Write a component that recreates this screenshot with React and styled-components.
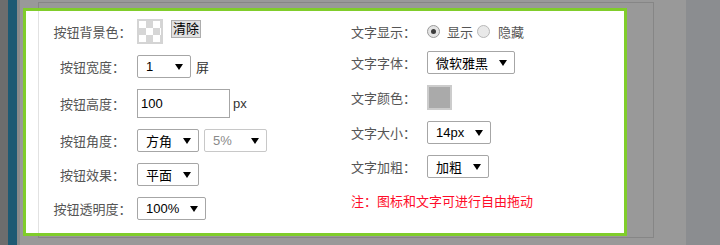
import React from "react";
import styled, { createGlobalStyle } from "styled-components";

const GlobalStyle = createGlobalStyle`
    html, body {
        margin: 0;
        padding: 0;
        background: #999999;
    }
    body {
        font-family: "Liberation Sans", "Noto Sans CJK SC", sans-serif;
        font-size: 13px;
    }
`;

const Page = styled.div`
    position: relative;
    display: flex;
    flex-direction: row;
    width: 720px;
    height: 245px;
    overflow: hidden;
    background: #999999;
`;

const Strip = styled.div`
    width: ${(p) => p.w}px;
    flex-shrink: 0;
    background: ${(p) => p.color};
`;

const Main = styled.div`
    flex: 1;
    padding: 2px 0 0 18px;
`;

const BackBox = styled.div`
    box-sizing: border-box;
    width: 616px;
    height: 236px;
    border: 1px solid #868686;
`;

const Panel = styled.div`
    position: absolute;
    left: 23px;
    top: 8px;
    box-sizing: border-box;
    width: 604px;
    height: 228px;
    border: 3px solid #80cd2b;
    background: #ffffff;
    display: flex;
    flex-direction: row;
`;

const Body = styled.div`
    flex: 1;
    display: flex;
    flex-direction: row;
    margin-left: 12px;
    border-left: 1px solid #e2e2e2;
`;

const Column = styled.div`
    display: flex;
    flex-direction: column;
    gap: 11px;
    padding-top: ${(p) => p.top}px;
    padding-left: ${(p) => p.left || 0}px;
    width: ${(p) => (p.width ? `${p.width}px` : "auto")};
    box-sizing: border-box;
`;

const Row = styled.div`
    display: flex;
    flex-direction: row;
    align-items: center;
    height: ${(p) => p.h}px;
`;

const Label = styled.span`
    flex-shrink: 0;
    width: ${(p) => p.w}px;
    margin-right: ${(p) => p.gap || 0}px;
    text-align: ${(p) => p.align || "left"};
    color: #555555;
    font-size: 13px;
    white-space: nowrap;
`;

const SelectBox = styled.div`
    box-sizing: border-box;
    display: flex;
    align-items: center;
    justify-content: space-between;
    width: ${(p) => p.w}px;
    height: 23px;
    margin-left: ${(p) => p.ml || 0}px;
    padding: 0 7px 0 8px;
    border: 1px solid ${(p) => (p.disabled ? "#c8c8c8" : "#a6a6a6")};
    border-radius: 2px;
    background: #ffffff;
    color: ${(p) => (p.disabled ? "#8a8a8a" : "#000000")};
    font-size: 13px;
    white-space: nowrap;
`;

const Arrow = styled.span`
    width: 0;
    height: 0;
    border-left: 4px solid transparent;
    border-right: 4px solid transparent;
    border-top: 6px solid #000000;
`;

const Select = ({ value, w, ml, disabled }) => (
    <SelectBox w={w} ml={ml} disabled={disabled}>
        <span>{value}</span>
        <Arrow />
    </SelectBox>
);

const TextInput = styled.div`
    box-sizing: border-box;
    width: 93px;
    height: 29px;
    padding-left: 3px;
    display: flex;
    align-items: center;
    border: 1px solid #a6a6a6;
    color: #000000;
    font-size: 13px;
`;

const Unit = styled.span`
    margin-left: ${(p) => p.ml}px;
    color: #333333;
    font-size: 13px;
`;

const Checker = styled.div`
    box-sizing: border-box;
    width: 26px;
    height: 25px;
    border: 2px solid #d4d4d4;
    background: repeating-conic-gradient(#d6d6d6 0 25%, #ffffff 0 50%) 0 0 / 14px 14px;
`;

const ColorSwatch = styled.div`
    box-sizing: border-box;
    width: 25px;
    height: 25px;
    border: 2px solid #cccccc;
    background: #aaaaaa;
`;

const ClearButton = styled.button`
    box-sizing: border-box;
    height: 18px;
    margin-left: 8px;
    margin-top: -6px;
    padding: 0 1px;
    border: 1px solid #adadad;
    border-radius: 0;
    background: #e1e1e1;
    color: #000000;
    font-family: inherit;
    font-size: 13px;
    line-height: 16px;
`;

const Radio = styled.span`
    box-sizing: border-box;
    width: 13px;
    height: 13px;
    border-radius: 50%;
    border: 1px solid ${(p) => (p.checked ? "#9a9a9a" : "#b8b8b8")};
    background: ${(p) => (p.checked ? "#e4e4e4" : "#e9e9e9")};
    display: flex;
    align-items: center;
    justify-content: center;
    margin-left: ${(p) => p.ml || 0}px;
    &::after {
        content: "";
        display: ${(p) => (p.checked ? "block" : "none")};
        width: 5px;
        height: 5px;
        border-radius: 50%;
        background: #3c3c3c;
    }
`;

const RadioText = styled.span`
    margin-left: ${(p) => p.ml}px;
    color: #555555;
    font-size: 13px;
`;

const Note = styled.span`
    color: #ff0d2a;
    font-size: 13px;
`;

export default function App() {
    return (
        <>
            <GlobalStyle />
            <Page>
                <Strip w={8} color="#6d6d6d" />
                <Strip w={9} color="#1e5a73" />
                <Strip w={3} color="#8a8a8a" />
                <Main>
                    <BackBox />
                </Main>
                <Strip w={34} color="#8b8d90" />

                <Panel>
                    <Body>
                        <Column top={8} left={11} width={312}>
                            <Row h={25}>
                                <Label w={85} gap={2} align="center">按钮背景色：</Label>
                                <Checker />
                                <ClearButton>清除</ClearButton>
                            </Row>
                            <Row h={23}>
                                <Label w={85} gap={2} align="center">按钮宽度：</Label>
                                <Select value="1" w={54} />
                                <Unit ml={5}>屏</Unit>
                            </Row>
                            <Row h={29}>
                                <Label w={85} gap={2} align="center">按钮高度：</Label>
                                <TextInput>100</TextInput>
                                <Unit ml={3}>px</Unit>
                            </Row>
                            <Row h={23}>
                                <Label w={85} gap={2} align="center">按钮角度：</Label>
                                <Select value="方角" w={62} />
                                <Select value="5%" w={63} ml={5} disabled />
                            </Row>
                            <Row h={23}>
                                <Label w={85} gap={2} align="center">按钮效果：</Label>
                                <Select value="平面" w={62} />
                            </Row>
                            <Row h={23}>
                                <Label w={85} gap={2} align="center">按钮透明度：</Label>
                                <Select value="100%" w={69} />
                            </Row>
                        </Column>
                        <Column top={12}>
                            <Row h={17}>
                                <Label w={76}>文字显示：</Label>
                                <Radio checked />
                                <RadioText ml={7}>显示</RadioText>
                                <Radio ml={4} />
                                <RadioText ml={8}>隐藏</RadioText>
                            </Row>
                            <Row h={23}>
                                <Label w={76}>文字字体：</Label>
                                <Select value="微软雅黑" w={88} />
                            </Row>
                            <Row h={25}>
                                <Label w={76}>文字颜色：</Label>
                                <ColorSwatch />
                            </Row>
                            <Row h={23}>
                                <Label w={76}>文字大小：</Label>
                                <Select value="14px" w={64} />
                            </Row>
                            <Row h={23}>
                                <Label w={76}>文字加粗：</Label>
                                <Select value="加粗" w={62} />
                            </Row>
                            <Row h={22}>
                                <Note>注：图标和文字可进行自由拖动</Note>
                            </Row>
                        </Column>
                    </Body>
                </Panel>
            </Page>
        </>
    );
}
